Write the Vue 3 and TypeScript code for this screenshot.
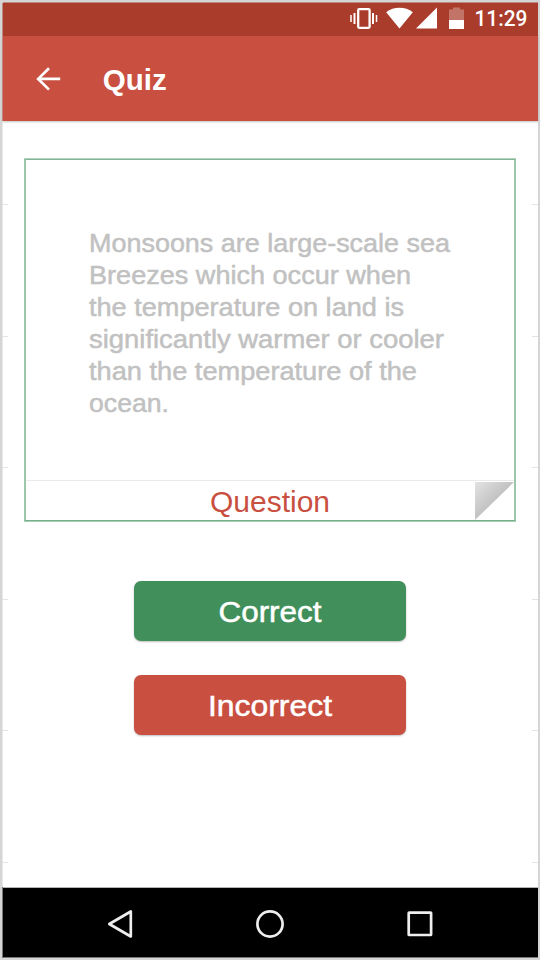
<script setup lang="ts">
interface Line {
  text: string
  width: number
}

const lines: Line[] = [
  { text: 'Monsoons are large-scale sea', width: 361 },
  { text: 'Breezes which occur when', width: 322 },
  { text: 'the temperature on land is', width: 315 },
  { text: 'significantly warmer or cooler', width: 355 },
  { text: 'than the temperature of the', width: 328 },
  { text: 'ocean.', width: 80 },
]
</script>

<template>
  <div class="device">
    <div class="status">
      <svg class="status-icons" width="124" height="33" viewBox="0 0 124 33" aria-hidden="true">
        <g fill="none" stroke="#fff">
          <rect x="8.2" y="7.2" width="11.4" height="18.6" rx="1" stroke-width="2.3" />
          <path d="M1 13v7M26.5 13v7" stroke-width="1.5" />
          <path d="M4.5 11v11M23 11v11" stroke-width="2" />
        </g>
        <path d="M36.2 10.2C43.5 4.4 55.5 4.4 62.8 10.2L49.5 26.5Z" fill="#fff" />
        <path d="M66 26.5L87 5.5V26.5Z" fill="#fff" />
        <path d="M99 7.5h4V5.5h7v2h4V18H99Z" fill="#c37468" />
        <path d="M99 18h15V27H99Z" fill="#fff" />
      </svg>
      <svg class="clock" width="56" height="33" aria-hidden="true">
        <text x="0.5" y="23.3" textLength="53" lengthAdjust="spacingAndGlyphs">11:29</text>
      </svg>
    </div>

    <header class="bar">
      <svg class="back" width="26" height="26" viewBox="0 0 26 26">
        <path d="M14 2.2L3.2 12.9L14 23.6M3.2 12.9H25.2" fill="none" stroke="#fff" stroke-width="2.7" />
      </svg>
      <svg class="title" width="90" height="40">
        <text x="0.7" y="30.5" textLength="64" lengthAdjust="spacingAndGlyphs">Quiz</text>
      </svg>
    </header>

    <main class="content">
      <section class="card">
        <div class="passage">
          <svg v-for="line in lines" :key="line.text" class="line" width="380" height="32">
            <text x="0" y="24" :textLength="line.width" lengthAdjust="spacingAndGlyphs">{{ line.text }}</text>
          </svg>
        </div>
        <footer class="card-footer">
          <svg class="label" width="120" height="40">
            <text x="0" y="31" textLength="120" lengthAdjust="spacingAndGlyphs">Question</text>
          </svg>
          <span class="fold"></span>
        </footer>
      </section>

      <button class="action correct" type="button">
        <svg width="103" height="40">
          <text x="-0.5" y="31" textLength="103" lengthAdjust="spacingAndGlyphs">Correct</text>
        </svg>
      </button>
      <button class="action incorrect" type="button">
        <svg width="124" height="40">
          <text x="0" y="31" textLength="124" lengthAdjust="spacingAndGlyphs">Incorrect</text>
        </svg>
      </button>
    </main>

    <nav class="nav">
      <svg width="30" height="32" viewBox="0 0 30 32">
        <path d="M26.8 3.5V28.5L5.3 16Z" />
      </svg>
      <svg width="32" height="32" viewBox="0 0 32 32">
        <circle cx="16" cy="16" r="12.6" />
      </svg>
      <svg width="30" height="32" viewBox="0 0 30 32">
        <rect x="3.7" y="4.6" width="22.4" height="22.4" rx="0.5" />
      </svg>
    </nav>
  </div>
</template>

<style>
body {
  background: #d5d5d5;
}
</style>

<style scoped>
.device {
  box-sizing: border-box;
  width: 540px;
  height: 960px;
  padding: 3px 2px 2px 3px;
  display: flex;
  flex-direction: column;
  background: #d5d5d5;
  font-family: "Liberation Sans", Arial, sans-serif;
}

svg {
  display: block;
  flex: none;
  overflow: visible;
}

.status {
  height: 33px;
  flex: none;
  display: flex;
  justify-content: flex-end;
  padding-right: 8px;
  background: #a93c2a;
  box-shadow: -1px 0 #bf8880, 0 -1px #bf8880;
}

.status-icons {
  margin-top: -1px;
}

.clock {
  font-family: Roboto, sans-serif;
  font-size: 21.5px;
  font-weight: 500;
  fill: #fff;
}

.bar {
  box-sizing: border-box;
  height: 85px;
  flex: none;
  display: flex;
  align-items: center;
  padding-left: 32px;
  gap: 41px;
  background: #c94f40;
  box-shadow: 0 1px 2px rgba(0, 0, 0, 0.25), -1px 0 #cf9189;
  z-index: 1;
}

.title {
  font-size: 30px;
  font-weight: 700;
  fill: #fff;
}

.content {
  box-sizing: border-box;
  height: 766px;
  flex: none;
  display: flex;
  flex-direction: column;
  align-items: center;
  padding: 37px 1px 0 0;
  background:
    repeating-linear-gradient(transparent 0 83px, #e3e3e3 83px 84px, transparent 84px 131.5px) left top / 5px 100% no-repeat,
    repeating-linear-gradient(transparent 0 83px, #e3e3e3 83px 84px, transparent 84px 131.5px) right top / 6px 100% no-repeat,
    #fff;
  box-shadow: -1px 0 #e8e8e8;
}

.card {
  box-sizing: border-box;
  width: 492px;
  height: 364px;
  flex: none;
  display: flex;
  flex-direction: column;
  justify-content: space-between;
  border: 1px solid #9dc7ab;
  border-top-color: #b2d3be;
  border-bottom-color: #a9d0b6;
  box-shadow:
    inset 0 1px #84b495,
    inset 0 -1px #72b089,
    inset 1px 0 #9dc7ab,
    inset -1px 0 #9dc7ab;
}

.passage {
  padding: 69px 0 0 64px;
}

.line {
  font-size: 26.5px;
  fill: #c1c1c1;
  stroke: #c1c1c1;
  stroke-width: 0.5px;
}

.card-footer {
  display: flex;
  justify-content: flex-end;
  box-sizing: border-box;
  height: 40px;
  margin: 0 1px 1px;
  border-top: 1px solid #eaeaea;
}

.label {
  margin-right: 145px;
  font-size: 30px;
  fill: #c94f40;
}

.fold {
  width: 39px;
  height: 38px;
  margin-top: 1px;
  background: linear-gradient(135deg, #e3e3e3, #c2c2c2 50%);
  clip-path: polygon(0 0, 100% 0, 0 100%);
}

.action {
  width: 272px;
  height: 60px;
  flex: none;
  display: flex;
  align-items: center;
  justify-content: center;
  margin: 0;
  padding: 0;
  border: 0;
  border-radius: 7px;
  box-shadow: 0 1px 2px rgba(0, 0, 0, 0.25);
  font-family: inherit;
  font-size: 30px;
  fill: #fff;
  stroke: #fff;
  stroke-width: 0.5px;
}

.correct {
  margin-top: 59px;
  background: #418f5a;
}

.incorrect {
  margin-top: 34px;
  background: #c94f40;
}

.nav {
  box-sizing: border-box;
  height: 71px;
  flex: none;
  display: flex;
  align-items: center;
  justify-content: space-between;
  padding: 2px 103px 0 101px;
  border-top: 1px solid #b5b5b5;
  border-bottom: 1px solid #777;
  background: #000;
  box-shadow: -1px 0 #777;
  fill: none;
  stroke: #eee;
  stroke-width: 2.7px;
  stroke-linejoin: round;
}
</style>
